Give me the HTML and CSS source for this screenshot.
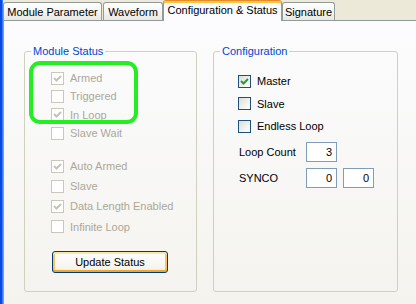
FILE: index.html
```html
<!DOCTYPE html>
<html>
<head>
<meta charset="utf-8">
<link rel="stylesheet" href="styles.css">
</head>
<body>
<div class="window">
  <div class="edge"></div>
  <div class="main">
    <div class="tabs">
      <div class="tab tab-params">Module Parameter</div>
      <div class="tab tab-wave">Waveform</div>
      <div class="tab tab-config active">Configuration &amp; Status</div>
      <div class="tab tab-sig">Signature</div>
    </div>
    <div class="page">
      <fieldset class="group group-status">
        <legend>Module Status</legend>
        <div class="status-body">
          <div class="rows rows-a">
            <div class="row disabled"><span class="cb checked"><svg viewBox="0 0 11 11"><polyline points="2,5 4.5,7.5 9,3"/></svg></span><span>Armed</span></div>
            <div class="row disabled"><span class="cb"></span><span>Triggered</span></div>
            <div class="row disabled"><span class="cb checked"><svg viewBox="0 0 11 11"><polyline points="2,5 4.5,7.5 9,3"/></svg></span><span>In Loop</span></div>
            <div class="row disabled"><span class="cb"></span><span>Slave Wait</span></div>
          </div>
          <div class="rows rows-b">
            <div class="row disabled"><span class="cb checked"><svg viewBox="0 0 11 11"><polyline points="2,5 4.5,7.5 9,3"/></svg></span><span>Auto Armed</span></div>
            <div class="row disabled"><span class="cb"></span><span>Slave</span></div>
            <div class="row disabled"><span class="cb checked"><svg viewBox="0 0 11 11"><polyline points="2,5 4.5,7.5 9,3"/></svg></span><span>Data Length Enabled</span></div>
            <div class="row disabled"><span class="cb"></span><span>Infinite Loop</span></div>
          </div>
          <button class="btn">Update Status</button>
        </div>
      </fieldset>
      <fieldset class="group group-config">
        <legend>Configuration</legend>
        <div class="config-body">
          <div class="row crow"><span class="cb enabled checked"><svg viewBox="0 0 11 11"><polyline points="2,5 4.5,7.5 9,3"/></svg></span><span>Master</span></div>
          <div class="row crow"><span class="cb enabled"></span><span>Slave</span></div>
          <div class="row crow"><span class="cb enabled"></span><span>Endless Loop</span></div>
          <div class="field-row field-loop"><span class="field-label">Loop Count</span><span class="tb">3</span></div>
          <div class="field-row field-synco"><span class="field-label">SYNCO</span><span class="tb">0</span><span class="tb">0</span></div>
        </div>
      </fieldset>
      <div class="highlight"></div>
    </div>
  </div>
</div>
</body>
</html>
```

FILE: styles.css
```css
html, body {
  margin: 0;
  padding: 0;
}
body {
  width: 416px;
  height: 304px;
  overflow: hidden;
  font-family: "Liberation Sans", Arial, sans-serif;
  font-size: 11px;
  color: #000;
}
.window {
  display: flex;
  height: 304px;
}
.edge {
  flex: none;
  width: 3px;
  background: linear-gradient(90deg, #0a48e0 0 2px, #3b7cf4 2px 3px);
}
.main {
  flex: 1;
  display: flex;
  flex-direction: column;
  background: #ece9d8;
  min-width: 0;
}
.tabs {
  flex: none;
  height: 20px;
  display: flex;
  align-items: flex-end;
}
.tab {
  box-sizing: border-box;
  height: 18px;
  border: 1px solid #919b9c;
  border-bottom: none;
  border-radius: 3px 3px 0 0;
  background: linear-gradient(#ffffff, #f3f3ef 60%, #e8e7e0);
  display: flex;
  align-items: center;
  justify-content: center;
  padding-top: 1px;
  white-space: nowrap;
}
.tab-params { width: 99px; margin-right: 1px; }
.tab-wave { width: 60px; }
.tab-config { width: 119px; }
.tab-sig { width: 53px; }
.tab.active {
  height: 21px;
  margin-bottom: -1px;
  position: relative;
  z-index: 1;
  border-top: 1px solid #e68b2c;
  box-shadow: inset 0 2px 0 #ffc73c;
  background: #fcfcfe;
  align-items: flex-start;
  padding-top: 3px;
}
.page {
  flex: 1;
  position: relative;
  border-left: 1px solid #919b9c;
  border-top: 1px solid #919b9c;
  background: linear-gradient(#fcfcfe, #f4f3ee);
  display: flex;
  align-items: stretch;
  gap: 16px;
  padding: 24px 0 12px 20px;
}
.group {
  margin: 0;
  padding: 0;
  border: 1px solid #d0d0bf;
  border-radius: 3px;
  box-sizing: border-box;
  min-width: 0;
}
.group legend {
  color: #0046d5;
  padding: 0 2px;
  margin-left: 6px;
  line-height: 13px;
}
.group-status { width: 173px; flex: none; }
.group-config { width: 185px; flex: none; }
.status-body {
  padding: 11px 0 0 26px;
}
.rows-a .row { height: 18.33px; }
.rows-b { margin-top: 13.6px; }
.rows-b .row { height: 20.2px; }
.row {
  display: flex;
  align-items: center;
  gap: 6px;
  white-space: nowrap;
}
.row.disabled { color: #aca899; }
.cb {
  flex: none;
  box-sizing: border-box;
  width: 13px;
  height: 13px;
  border: 1px solid #cac8bb;
  background: #ffffff;
  display: block;
}
.cb svg {
  display: block;
  width: 11px;
  height: 11px;
}
.cb polyline {
  fill: none;
  stroke: #c6c3b5;
  stroke-width: 2;
}
.cb.enabled {
  border-color: #1c5180;
  background: linear-gradient(135deg, #dcdcd7, #f6f6f3 70%, #ffffff);
}
.cb.enabled polyline { stroke: #21a121; }
.btn {
  display: block;
  margin: 14.8px 0 0 1px;
  width: 116px;
  height: 22px;
  box-sizing: border-box;
  border: 1px solid #003c74;
  border-radius: 3px;
  background: linear-gradient(#ffffff, #f5f4ef 80%, #e9e6dc);
  box-shadow: inset 0 2px 0 #fde7a6, inset 0 -2px 0 #f2a72a, inset 2px 0 0 #f8c463, inset -2px 0 0 #f8c463;
  font-family: "Liberation Sans", Arial, sans-serif;
  font-size: 11px;
  color: #000;
  padding: 0;
}
.config-body {
  padding: 11.75px 0 0 24px;
}
.crow { height: 22.5px; gap: 6px; }
.field-row {
  display: flex;
  align-items: center;
  gap: 6px;
  height: 20px;
}
.field-loop { margin-top: 4.25px; }
.field-synco { margin-top: 6px; }
.field-label {
  width: 62px;
  padding-left: 1px;
  margin-right: -1px;
  flex: none;
}
.tb {
  box-sizing: border-box;
  width: 31px;
  height: 20px;
  border: 1px solid #7f9db9;
  background: #ffffff;
  text-align: right;
  padding-right: 4px;
  line-height: 18px;
  flex: none;
}
.highlight {
  position: absolute;
  left: 25px;
  top: 40px;
  width: 109px;
  height: 63px;
  box-sizing: border-box;
  border: 4px solid #22ee22;
  border-radius: 11px;
}
```
